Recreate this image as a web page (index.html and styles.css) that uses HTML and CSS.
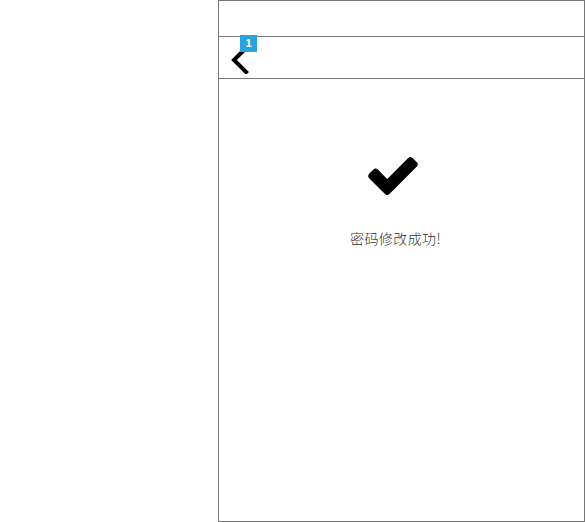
FILE: index.html
```html
<!DOCTYPE html>
<html lang="zh">
<head>
<meta charset="utf-8">
<link rel="stylesheet" href="styles.css">
</head>
<body>
<div class="phone">
  <div class="statusbar"></div>
  <div class="navbar">
    <span class="back">
      <svg width="20" height="32" viewBox="0 0 20 32" class="chev"><path d="M16.5 4.5 L3 18 L16.5 31.5" fill="none" stroke="#000" stroke-width="4" stroke-linecap="butt" stroke-linejoin="miter"/></svg>
      <span class="badge">1</span>
    </span>
  </div>
  <div class="content">
    <svg class="check" width="50" height="38" viewBox="121 334 1550 1188"><path d="M1671 566q0 40-28 68l-724 724-136 136q-28 28-68 28t-68-28l-136-136-362-362q-28-28-28-68t28-68l136-136q28-28 68-28t68 28l294 295 656-657q28-28 68-28t68 28l136 136q28 28 28 68z" fill="#000"/></svg>
    <p class="msg">密码修改成功!</p>
  </div>
</div>
</body>
</html>
```
FILE: styles.css
```css
html, body { margin: 0; padding: 0; background: #fff; }
body { font-family: "Noto Sans CJK SC", "Noto Sans", sans-serif; }
.phone {
  margin-left: 218px;
  width: 365px;
  height: 520px;
  border: 1px solid #777;
  display: flex;
  flex-direction: column;
}
.statusbar { height: 35px; border-bottom: 1px solid #777; }
.navbar { height: 41px; border-bottom: 1px solid #777; display: flex; align-items: center; }
.back { position: relative; margin-left: 12px; width: 20px; height: 32px; display: block; }
.chev { display: block; }
.badge {
  position: absolute;
  left: 9px; top: -7px;
  width: 17px; height: 17px;
  background: #29a3dc;
  color: #fff;
  font-family: "Liberation Sans", sans-serif;
  font-size: 11px;
  font-weight: bold;
  line-height: 17px;
  text-align: center;
}
.content { display: flex; flex-direction: column; align-items: center; padding-top: 78px; padding-right: 18px; }
.check { display: block; }
.msg { margin: 33px 0 0 6px; font-size: 14px; color: #333; line-height: 20px; font-weight: 300; letter-spacing: 0.4px; }
```
